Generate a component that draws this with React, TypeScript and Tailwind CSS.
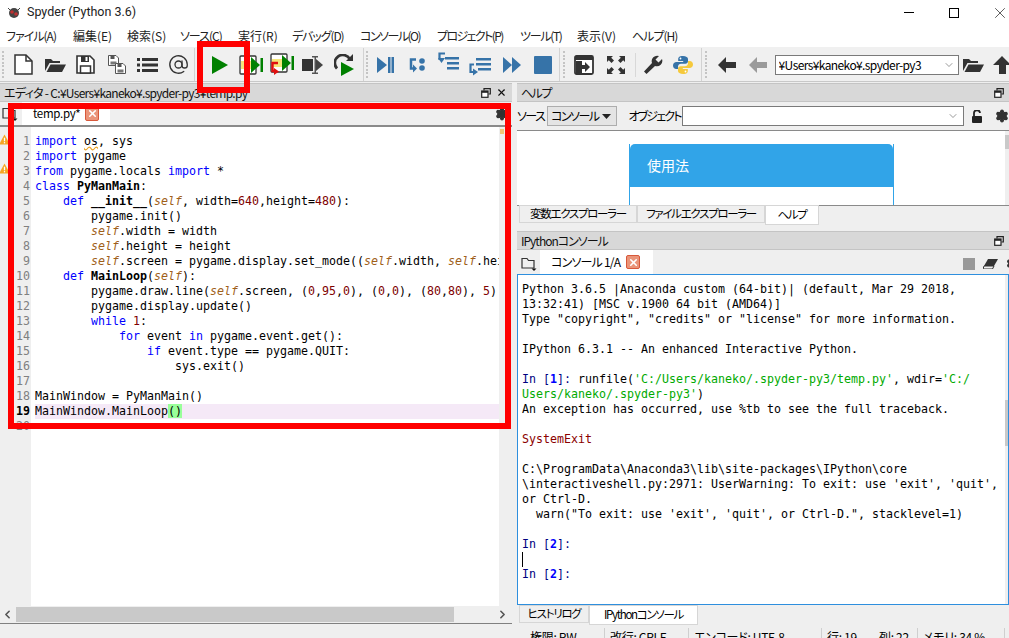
import * as React from 'react';
import { ChevronDown, ChevronLeft, ChevronRight, Settings, X, AtSign } from 'lucide-react';

const JP = "font-['Noto_Sans_CJK_JP','Noto_Sans',sans-serif] [font-feature-settings:'palt'] whitespace-nowrap";
const MONO = "font-['DejaVu_Sans_Mono',monospace] text-[11.63px] leading-[15px] whitespace-pre";

const menus = [
  { label: 'ファイル(A)', w: 'w-[67px]', t: 'tracking-[-1px]' },
  { label: '編集(E)', w: 'w-[54px]', t: '' },
  { label: '検索(S)', w: 'w-[53px]', t: '' },
  { label: 'ソース(C)', w: 'w-[58px]', t: 'tracking-[-1px]' },
  { label: '実行(R)', w: 'w-[54px]', t: '' },
  { label: 'デバッグ(D)', w: 'w-[68px]', t: 'tracking-[-1.1px]' },
  { label: 'コンソール(O)', w: 'w-[77px]', t: 'tracking-[-1.5px]' },
  { label: 'プロジェクト(P)', w: 'w-[83px]', t: 'tracking-[-1.6px]' },
  { label: 'ツール(T)', w: 'w-[57px]', t: 'tracking-[-1.3px]' },
  { label: '表示(V)', w: 'w-[55px]', t: '' },
  { label: 'ヘルプ(H)', w: 'w-[60px]', t: 'tracking-[-1px]' },
];

function K({ children }: { children: React.ReactNode }) {
  return <span className="text-[#0000ff]">{children}</span>;
}
function S() {
  return <span className="italic text-[#a0601a]">self</span>;
}
function N({ children }: { children: React.ReactNode }) {
  return <span className="text-[#800000]">{children}</span>;
}
function B({ children }: { children: React.ReactNode }) {
  return <span className="font-bold">{children}</span>;
}

const codeLines: React.ReactNode[] = [
  <><K>import</K> <span className="underline decoration-wavy decoration-[#e8a020]">os</span>, sys</>,
  <><K>import</K> pygame</>,
  <><K>from</K> pygame.locals <K>import</K> *</>,
  <><K>class</K> <B>PyManMain</B>:</>,
  <>    <K>def</K> <B>__init__</B>(<S />, width=<N>640</N>,height=<N>480</N>):</>,
  <>        pygame.init()</>,
  <>        <S />.width = width</>,
  <>        <S />.height = height</>,
  <>        <S />.screen = pygame.display.set_mode((<S />.width, <S />.height))</>,
  <>    <K>def</K> <B>MainLoop</B>(<S />):</>,
  <>        pygame.draw.line(<S />.screen, (<N>0</N>,<N>95</N>,<N>0</N>), (<N>0</N>,<N>0</N>), (<N>80</N>,<N>80</N>), <N>5</N>)</>,
  <>        pygame.display.update()</>,
  <>        <K>while</K> <N>1</N>:</>,
  <>            <K>for</K> event <K>in</K> pygame.event.get():</>,
  <>                <K>if</K> event.type == pygame.QUIT:</>,
  <>                    sys.exit()</>,
  <></>,
  <>MainWindow = PyManMain()</>,
  <>MainWindow.MainLoop<span className="bg-[#99ff99]">()</span></>,
  <></>,
];

function Prompt({ n }: { n: string }) {
  return <><span className="text-[#000080]">In [</span><span className="font-bold text-[#0000ff]">{n}</span><span className="text-[#000080]">]:</span></>;
}

function Handle() {
  return (
    <div className="grid h-[27px] w-[3px] grid-cols-1 content-between">
      {[0, 1, 2, 3, 4, 5, 6, 7].map((i) => <span key={i} className="h-[2px] w-[2px] bg-[#c4c4c4]" />)}
    </div>
  );
}

function Sep() {
  return <div className="h-[34px] w-[1px] bg-[#d2d2d2]" />;
}

function Slot({ children, wide }: { children: React.ReactNode; wide?: boolean }) {
  return <div className={`flex items-center justify-center ${wide ? 'w-[31.6px]' : 'w-[31px]'}`}>{children}</div>;
}

const DARK = '#333333';
const BLUE = '#3673a8';
const GREEN = '#008000';

function Icon({ children, w = 22, h = 22 }: { children: React.ReactNode; w?: number; h?: number }) {
  return <svg width={w} height={h} viewBox={`0 0 ${w} ${h}`} className="block shrink-0">{children}</svg>;
}

function FolderOpen({ w = 22 }: { w?: number }) {
  return (
    <Icon w={w} h={18}>
      <path d="M1 15V3h6l2 2h7v2H5.500L1 15z" fill={DARK} />
      <path d="M2.500 16L6.500 8.500H22L18 16z" fill={DARK} />
    </Icon>
  );
}

function FloppySmall({ x, y }: { x: number; y: number }) {
  return (
    <g transform={`translate(${x} ${y})`}>
      <path d="M.5.5H8L10.500 3v7.500H.5z" fill="#fff" stroke="#555" />
      <rect x="2.500" y="1" width="4" height="3" fill="#555" />
      <rect x="2.500" y="6.500" width="6" height="3" fill="#777" />
    </g>
  );
}

function Arrow({ color }: { color: string }) {
  return (
    <Icon w={20} h={18}>
      <path d="M9 1L1 9l8 8V12h10V6H9z" fill={color} />
    </Icon>
  );
}

function Toolbar() {
  return (
    <div className="flex h-[35px] items-center overflow-hidden border-b border-[#c8c8c8] bg-[#f0f0f0] pt-[1px] [&>*]:shrink-0">
      <div className="ml-[2px] mr-[3px]"><Handle /></div>
      <Slot>
        <Icon w={19} h={21}>
          <path d="M1 1h11l6 6v13H1z" fill="#fff" stroke={DARK} strokeWidth="1.500" />
          <path d="M12 1v6h6" fill="none" stroke={DARK} strokeWidth="1.500" />
        </Icon>
      </Slot>
      <Slot><FolderOpen /></Slot>
      <Slot>
        <Icon w={19} h={19}>
          <path d="M1 1h13l4 4v13H1z" fill="#fff" stroke={DARK} strokeWidth="1.600" />
          <rect x="5" y="1" width="8" height="6" fill={DARK} />
          <rect x="9.500" y="2" width="2" height="4" fill="#fff" />
          <rect x="4.500" y="11" width="10" height="7" fill="#fff" stroke={DARK} strokeWidth="1.500" />
        </Icon>
      </Slot>
      <Slot>
        <Icon w={20} h={20}>
          <FloppySmall x={1} y={0} />
          <FloppySmall x={8} y={8} />
        </Icon>
      </Slot>
      <Slot>
        <Icon w={21} h={16}>
          <rect x="0" y="1" width="3" height="3" fill={DARK} />
          <rect x="5" y="1" width="16" height="3" fill={DARK} />
          <rect x="0" y="6.500" width="3" height="3" fill={DARK} />
          <rect x="5" y="6.500" width="16" height="3" fill={DARK} />
          <rect x="0" y="12" width="3" height="3" fill={DARK} />
          <rect x="5" y="12" width="16" height="3" fill={DARK} />
        </Icon>
      </Slot>
      <Slot><AtSign size={21} color={DARK} strokeWidth={1.500} /></Slot>
      <Sep />
      <div className="w-[9.500px]" />
      <Slot>
        <Icon w={18} h={18}><path d="M1 0l16 9L1 18z" fill={GREEN} /></Icon>
      </Slot>
      <Slot>
        <Icon w={24} h={20}>
          <rect x="1" y="1" width="16" height="18" rx="1" fill="#fff" stroke={DARK} strokeWidth="1.300" />
          <rect x="2" y="6" width="14" height="8" fill="#f5e77a" />
          <path d="M12 2l9 8-9 8z" fill={GREEN} />
          <rect x="21.500" y="3" width="2.500" height="14" fill={GREEN} />
        </Icon>
      </Slot>
      <Slot>
        <Icon w={24} h={24}>
          <rect x="1" y="1" width="16" height="18" rx="1" fill="#fff" stroke={DARK} strokeWidth="1.300" />
          <rect x="2" y="6" width="14" height="8" fill="#f5e77a" />
          <path d="M12 2l9 8-9 8z" fill={GREEN} />
          <rect x="21.500" y="3" width="2.500" height="14" fill={GREEN} />
          <path d="M8 10H2.500v8H5" fill="none" stroke="#e01010" strokeWidth="2.400" />
          <path d="M4 15l5 3.500L4 22z" fill="#e01010" />
        </Icon>
      </Slot>
      <Slot>
        <Icon w={22} h={20}>
          <rect x="0" y="4" width="11" height="12" fill={DARK} />
          <rect x="12.500" y="1" width="1.500" height="18" fill="#555" />
          <rect x="10" y="1" width="6" height="1.500" fill="#555" />
          <rect x="10" y="17.500" width="6" height="1.500" fill="#555" />
          <path d="M14 4l7 6-7 6z" fill="#444" />
        </Icon>
      </Slot>
      <Slot>
        <Icon w={21} h={22}>
          <path d="M16 5.500A8 8 0 1 0 3 14.500" fill="none" stroke={DARK} strokeWidth="2.800" />
          <path d="M12 7h7V0z" fill={DARK} />
          <path d="M7 8l13 7-13 7z" fill={GREEN} />
        </Icon>
      </Slot>
      <div className="w-[3px]" />
      <Sep />
      <div className="ml-[2px] mr-[1px]"><Handle /></div>
      <Slot wide>
        <Icon w={18} h={18}>
          <path d="M1 1l10 8-10 8z" fill={BLUE} />
          <rect x="12" y="1" width="2.500" height="16" fill={BLUE} />
          <rect x="15.500" y="1" width="2.500" height="16" fill={BLUE} />
        </Icon>
      </Slot>
      <Slot wide>
        <Icon w={16} h={16}>
          <path d="M7 2.500H2v9h3.500" fill="none" stroke={BLUE} strokeWidth="2.500" />
          <path d="M4 7.500l4 4-4 4z" fill={BLUE} />
          <circle cx="13" cy="4" r="2.800" fill={BLUE} />
          <circle cx="13" cy="11" r="2.800" fill={BLUE} />
        </Icon>
      </Slot>
      <Slot wide>
        <div className="-mt-[6px]">
          <Icon w={21} h={19}>
            <path d="M7 1.500H1.500V8" fill="none" stroke={BLUE} strokeWidth="2.200" />
            <path d="M0 6h7l-3.500 5z" fill={BLUE} />
            <rect x="7" y="5" width="14" height="2.500" fill={BLUE} />
            <rect x="9" y="10" width="12" height="2.500" fill={BLUE} />
            <rect x="9" y="15" width="12" height="2.500" fill={BLUE} />
          </Icon>
        </div>
      </Slot>
      <Slot wide>
        <div className="mt-[5px]">
          <Icon w={22} h={20}>
            <rect x="7" y="1" width="15" height="2.500" fill={BLUE} />
            <rect x="7" y="6" width="15" height="2.500" fill={BLUE} />
            <path d="M5 7.500H1.500V15H5" fill="none" stroke={BLUE} strokeWidth="2.200" />
            <path d="M4 11.500l5 3.500-5 3.500z" fill={BLUE} />
            <rect x="9" y="11" width="13" height="2.500" fill={BLUE} />
          </Icon>
        </div>
      </Slot>
      <Slot wide>
        <Icon w={20} h={18}>
          <path d="M1 1l9 8-9 8z" fill={BLUE} />
          <path d="M10 1l9 8-9 8z" fill={BLUE} />
        </Icon>
      </Slot>
      <Slot wide>
        <div className="h-[18px] w-[18px] rounded-[1px] bg-[#3673a8]" />
      </Slot>
      <Sep />
      <div className="ml-[3px] mr-[2px]"><Handle /></div>
      <Slot>
        <Icon w={20} h={20}>
          <rect x="1" y="1" width="18" height="18" rx="1.500" fill="#fff" stroke={DARK} strokeWidth="1.800" />
          <rect x="1" y="1" width="18" height="4" fill={DARK} />
          <path d="M2 6h6v12H2z" fill={DARK} />
          <path d="M8 10h3V7l5 5-5 5v-3H8z" fill={DARK} />
        </Icon>
      </Slot>
      <div className="w-[1px]" />
      <Slot>
        <Icon w={20} h={20}>
          <path d="M1 1h6L5.200 2.800 8 5.500 5.500 8 2.800 5.200 1 7z" fill={DARK} />
          <path d="M19 1v6l-1.800-1.800L14.500 8 12 5.500l2.800-2.700L13 1z" fill={DARK} />
          <path d="M1 19v-6l1.800 1.800L5.500 12 8 14.500l-2.800 2.700L7 19z" fill={DARK} />
          <path d="M19 19h-6l1.800-1.800L12 14.500l2.500-2.500 2.700 2.800L19 13z" fill={DARK} />
        </Icon>
      </Slot>
      <div className="ml-[3.500px] h-[24px] w-[1px] bg-[#d8d8d8]" />
      <div className="w-[1.500px]" />
      <Slot>
        <Icon w={20} h={20}>
          <path d="M19 4l-3.500 3.500-3-3L16 1a5.500 5.500 0 0 0-7 7L1 16.500 3.500 19l8.500-8a5.500 5.500 0 0 0 7-7z" fill={DARK} />
        </Icon>
      </Slot>
      <div className="ml-[5px] w-[22px]">
        <Icon w={20} h={20}>
          <path d="M10 1C6 1 5.200 2.500 5.200 4v2h5v1H3.500C1.500 7 0 8.200 0 10.500S1.500 14 3.200 14h1.800v-2.200c0-1.700 1.500-3 3-3h4.500c1.300 0 2.500-1 2.500-2.500V4c0-1.600-2-3-5-3z" fill="#3673a8" />
          <path d="M10 19c4 0 4.800-1.500 4.800-3v-2h-5v-1h6.700c2 0 3.500-1.200 3.500-3.500S18.500 6 16.800 6H15v2.200c0 1.700-1.500 3-3 3H7.500C6.200 11.200 5 12.200 5 13.700V16c0 1.600 2 3 5 3z" fill="#f5c93c" />
          <circle cx="7.500" cy="3.500" r=".9" fill="#fff" />
          <circle cx="12.500" cy="16.500" r=".9" fill="#fff" />
        </Icon>
      </div>
      <div className="ml-[5.500px] mr-[3px]"><Sep /></div>
      <Handle />
      <div className="w-[4px]" />
      <Slot><Arrow color="#333333" /></Slot>
      <Slot><Arrow color="#9a9a9a" /></Slot>
      <div className="w-[1px]" />
      <div className={`flex h-[20px] w-[184px] items-center border border-[#7a7a7a] bg-white pl-[3px] text-[12px] tracking-[-0.6px] ${JP}`}>
        <span className="flex-1 truncate">¥Users¥kaneko¥.spyder-py3</span>
        <ChevronDown size={12} className="mr-[3px] text-[#555]" strokeWidth={1.200} />
      </div>
      <div className="ml-[3px]"><FolderOpen /></div>
      <div className="ml-[9px]">
        <Icon w={18} h={20}><path d="M9 1l9 9h-5v9H6v-9H0z" fill={DARK} /></Icon>
      </div>
    </div>
  );
}

function PaneHeader({ title, track, children }: { title: string; track: string; children: React.ReactNode }) {
  return (
    <div className={`flex h-[19px] items-center justify-between border-y border-[#c4c4c4] bg-[#d8d8d8] pl-[4px] pr-[5px] text-[12px] text-[#111] ${JP}`}>
      <span className={track}>{title}</span>
      <div className="flex items-center gap-[5px]">{children}</div>
    </div>
  );
}

function Undock() {
  return (
    <svg width="10" height="10" viewBox="0 0 10 10" className="block">
      <path d="M3 2.500V.7h6.300V6H7.500" fill="none" stroke="#222" strokeWidth="1.200" />
      <rect x=".7" y="3" width="6.300" height="6.300" fill="#fff" stroke="#222" strokeWidth="1.200" />
      <rect x=".7" y="3" width="6.300" height="1.800" fill="#222" />
    </svg>
  );
}

function TabClose() {
  return (
    <span className="flex h-[14px] w-[14px] shrink-0 items-center justify-center rounded-[2px] border border-[#d8583a] bg-[#ea9479]">
      <X size={11} color="#fff" strokeWidth={3.500} />
    </span>
  );
}

function BrowseTabs() {
  return (
    <svg width="16" height="14" viewBox="0 0 16 14" className="block">
      <path d="M1 11V1.500h5l1.500 2H13V11z" fill="none" stroke="#333" strokeWidth="1.200" />
      <path d="M10.500 11.500h5L13 14z" fill="#111" />
    </svg>
  );
}

function Warn() {
  return (
    <svg width="11" height="11" viewBox="0 0 12 11" className="block">
      <path d="M6 0l6 11H0z" fill="#f5a623" />
      <rect x="5.300" y="3.500" width="1.400" height="4" fill="#fff" />
      <rect x="5.300" y="8.300" width="1.400" height="1.400" fill="#fff" />
    </svg>
  );
}

function Editor() {
  return (
    <div className="flex w-[512px] shrink-0 flex-col">
      <PaneHeader title="エディタ - C:¥Users¥kaneko¥.spyder-py3¥temp.py" track="tracking-[-0.7px]">
        <Undock />
        <X size={11} color="#111" strokeWidth={2.500} />
      </PaneHeader>
      <div className="flex h-[25px] items-end justify-between border-b-2 border-[#8a8a8a] bg-[#efefef]">
        <div className="flex items-end">
          <div className="mb-[4px] ml-[2px] w-[20px]"><BrowseTabs /></div>
          <div className={`flex h-[23px] w-[88px] items-center gap-[5px] bg-white pl-[11px] text-[11.500px] tracking-[-0.3px] ${JP}`}>
            <span>temp.py*</span>
            <TabClose />
          </div>
        </div>
        <Settings size={14} className="mb-[4px] mr-[3px]" color="#333" fill="#333" />
      </div>
      <div className="flex h-[479px] bg-white">
        <div className="relative flex w-[31px] shrink-0 flex-col bg-[#efefef] pt-[7px]">
          {codeLines.map((_, i) => (
            <div key={i} className={`${MONO} pr-[1px] text-right ${i === 18 ? 'font-bold text-black' : 'text-[#808080]'}`}>{i + 1}</div>
          ))}
          <div className="absolute left-[-1px] top-[7px]"><Warn /></div>
          <div className="absolute left-[-1px] top-[36px]"><Warn /></div>
        </div>
        <div className="min-w-0 flex-1 overflow-hidden pl-[4px] pt-[7px]">
          {codeLines.map((line, i) => (
            <div key={i} className={`${MONO} h-[15px] ${i === 18 ? 'bg-[#f5e9f7]' : ''}`}>{line}</div>
          ))}
        </div>
        <div className="flex w-[13px] shrink-0 flex-col bg-[#efefef] pl-[1px] pt-[2px]">
          <div className="h-[5px] w-[4px] bg-[#f0c878]" />
        </div>
      </div>
      <div className="flex h-[17px] items-center bg-[#efefef]">
        <ChevronLeft size={13} className="ml-[1px] mr-[2px]" color="#555" strokeWidth={3} />
        <div className="h-[15px] w-[438px] bg-[#c9c9c9]" />
        <div className="flex-1" />
        <ChevronRight size={13} className="mr-[3px]" color="#555" strokeWidth={3} />
      </div>
      <div className="h-[1px] bg-[#808080]" />
    </div>
  );
}

function BottomTab({ label, active, w }: { label: string; active?: boolean; w: string }) {
  return (
    <div className={`flex ${w} items-center justify-center border border-[#d6d6d6] text-[11.500px] tracking-[-1.300px] ${JP} ${active ? 'h-[20px] bg-white' : 'h-[18px] bg-[#efefef]'}`}>
      {label}
    </div>
  );
}

function HelpPane() {
  return (
    <div className="flex flex-col">
      <PaneHeader title="ヘルプ" track="tracking-[-1.500px]"><Undock /></PaneHeader>
      <div className={`flex h-[28px] items-center bg-[#efefef] text-[12px] ${JP}`}>
        <span className="w-[30px] shrink-0 tracking-[-1.500px]">ソース</span>
        <div className="flex h-[20px] w-[72px] items-center justify-between border border-[#adadad] bg-[#e4e4e4] pl-[3px] pr-[5px]">
          <span className="tracking-[-1.500px]">コンソール</span>
          <svg width="9" height="5" viewBox="0 0 9 5"><path d="M0 0h9L4.500 5z" fill="#222" /></svg>
        </div>
        <span className="ml-[11px] w-[54px] shrink-0 tracking-[-1.800px]">オブジェクト</span>
        <div className="flex h-[20px] w-[289px] items-center justify-end border border-[#7a7a7a] bg-white pr-[4px]">
          <ChevronDown size={12} className="text-[#555]" strokeWidth={1.200} />
        </div>
        <svg width="11" height="13" viewBox="0 0 11 13" className="ml-[8px] block shrink-0">
          <path d="M2 6V3.500a3 3 0 0 1 6-.5" fill="none" stroke="#222" strokeWidth="1.800" />
          <rect x="0" y="6" width="10" height="7" rx="1" fill="#222" />
        </svg>
        <Settings size={14} className="ml-[12px] shrink-0" color="#333" fill="#333" />
      </div>
      <div className="flex h-[76px] border-y border-[#8a8a8a] bg-white">
        <div className="flex flex-1 justify-center overflow-hidden pt-[13px]">
          <div className="ml-[1px] w-[265px] border-x border-[#31a4e8]">
            <div className={`flex h-[43px] items-center rounded-t-[5px] bg-[#31a4e8] pl-[17px] text-[14px] text-white ${JP}`}>使用法</div>
          </div>
        </div>
        <div className="w-[4px] bg-[#efefef]">
          <div className="mt-[4px] h-[14px] w-[4px] bg-[#c9c9c9]" />
        </div>
      </div>
      <div className="-mt-[1px] flex h-[26px] items-start bg-transparent pl-[2px]">
        <BottomTab label="変数エクスプローラー" w="w-[118px]" />
        <BottomTab label="ファイルエクスプローラー" w="w-[128px]" />
        <BottomTab label="ヘルプ" w="w-[54px]" active />
      </div>
    </div>
  );
}

function ConsolePane() {
  const lines: React.ReactNode[] = [
    'Python 3.6.5 |Anaconda custom (64-bit)| (default, Mar 29 2018,',
    '13:32:41) [MSC v.1900 64 bit (AMD64)]',
    'Type "copyright", "credits" or "license" for more information.',
    '',
    'IPython 6.3.1 -- An enhanced Interactive Python.',
    '',
    <><Prompt n="1" /> runfile(<span className="text-[#00aa00]">'C:/Users/kaneko/.spyder-py3/temp.py'</span>, wdir=<span className="text-[#00aa00]">'C:/</span></>,
    <><span className="text-[#00aa00]">Users/kaneko/.spyder-py3'</span>)</>,
    'An exception has occurred, use %tb to see the full traceback.',
    '',
    <span className="text-[#8b0000]">SystemExit</span>,
    '',
    'C:\\ProgramData\\Anaconda3\\lib\\site-packages\\IPython\\core',
    '\\interactiveshell.py:2971: UserWarning: To exit: use \'exit\', \'quit\',',
    'or Ctrl-D.',
    '  warn("To exit: use \'exit\', \'quit\', or Ctrl-D.", stacklevel=1)',
    '',
    <Prompt n="2" />,
    <span className="inline-block h-[15px] w-[1px] bg-black align-top" />,
    <Prompt n="2" />,
  ];
  return (
    <div className="flex flex-1 flex-col">
      <PaneHeader title="IPythonコンソール" track="tracking-[-1px]"><Undock /></PaneHeader>
      <div className="flex h-[24px] items-end justify-between bg-[#efefef]">
        <div className="flex items-end">
          <div className="mb-[3px] ml-[4px] w-[19px]"><BrowseTabs /></div>
          <div className={`flex h-[24px] w-[113px] items-center gap-[6px] bg-white pl-[11px] text-[12px] ${JP}`}>
            <span className="tracking-[-0.800px]">コンソール 1/A</span>
            <TabClose />
          </div>
        </div>
        <div className="mb-[4px] flex items-center gap-[8px]">
          <div className="h-[12px] w-[12px] bg-[#999]" />
          <svg width="15" height="10" viewBox="0 0 15 10"><path d="M5 0h10l-4 7H1z" fill="#333" /><path d="M1 7h10l-1.500 3H0z" fill="none" stroke="#333" /></svg>
          <Settings size={13} className="-mr-[10px]" color="#333" fill="#333" />
        </div>
      </div>
      <div className="flex h-[331px] border border-[#2e8fde] bg-white">
        <div className="min-w-0 flex-1 overflow-hidden pl-[4px] pt-[6.500px]">
          {lines.map((line, i) => (
            <div key={i} className={`${MONO} h-[15px]`}>{line}</div>
          ))}
        </div>
        <div className="w-[3px] bg-[#efefef]">
          <div className="mt-[125px] h-[46px] w-[3px] bg-[#c9c9c9]" />
        </div>
      </div>
      <div className="flex h-[20px] items-start bg-[#efefef] pl-[2px]">
        <BottomTab label="ヒストリログ" w="w-[70px]" />
        <BottomTab label="IPythonコンソール" w="w-[109px]" active />
      </div>
    </div>
  );
}

function StatusBar() {
  const items = [
    { text: '権限: RW', w: 'w-[80px]' },
    { text: '改行: CRLF', w: 'w-[84px]' },
    { text: 'エンコード: UTF-8', w: 'w-[133px]' },
    { text: '行: 19', w: 'w-[52px]' },
    { text: '列: 22', w: 'w-[44px]' },
    { text: 'メモリ: 34 %', w: 'w-[87px]' },
  ];
  return (
    <div className={`flex h-[13px] items-start bg-[#efefef] pl-[525px] pt-[3px] text-[12px] leading-[17px] tracking-[-0.300px] ${JP}`}>
      {items.map((it, i) => (
        <div key={i} className={`${it.w} h-[16px] shrink-0 pl-[5px] ${i === 3 ? '' : 'border-r border-[#cfcfcf]'}`}>{it.text}</div>
      ))}
    </div>
  );
}

export default function App() {
  return (
    <div className="relative flex h-[638px] w-[1009px] flex-col overflow-hidden bg-[#efefef] text-black">
      <div className="flex h-[25px] shrink-0 items-center bg-white pl-[7px]">
        <svg width="14" height="12" viewBox="0 0 14 12" className="block">
          <circle cx="7" cy="6" r="5" fill="#444" />
          <circle cx="5" cy="5" r="1.800" fill="#c03030" />
          <circle cx="9" cy="7" r="1.800" fill="#c03030" />
          <path d="M1 1l3 3M13 1l-3 3" stroke="#444" />
        </svg>
        <span className="ml-[6px] font-['Roboto',sans-serif] text-[12.500px] text-[#222]">Spyder (Python 3.6)</span>
        <div className="ml-auto flex items-center">
          <div className="mr-[35px] h-[1px] w-[10px] bg-black" />
          <div className="mr-[32px] h-[10px] w-[10px] border border-black" />
          <X size={18} color="#111" strokeWidth={0.900} />
        </div>
      </div>
      <div className={`flex h-[22px] shrink-0 items-center bg-white pl-[6px] text-[12px] text-[#222] ${JP}`}>
        {menus.map((m) => <span key={m.label} className={`${m.w} ${m.t} shrink-0`}>{m.label}</span>)}
      </div>
      <Toolbar />
      <div className="mt-[1px] flex min-h-0 flex-1">
        <Editor />
        <div className="w-[5px] shrink-0" />
        <div className="flex min-w-0 flex-1 flex-col">
          <HelpPane />
          <ConsolePane />
        </div>
      </div>
      <StatusBar />
      {/* annotation boxes drawn on top of the screenshot */}
      <div className="absolute left-[197px] top-[41px] h-[52px] w-[53px] border-[6px] border-[#ff0000]" />
      <div className="absolute left-[8px] top-[103px] h-[326px] w-[503px] border-[6px] border-[#ff0000]" />
    </div>
  );
}
